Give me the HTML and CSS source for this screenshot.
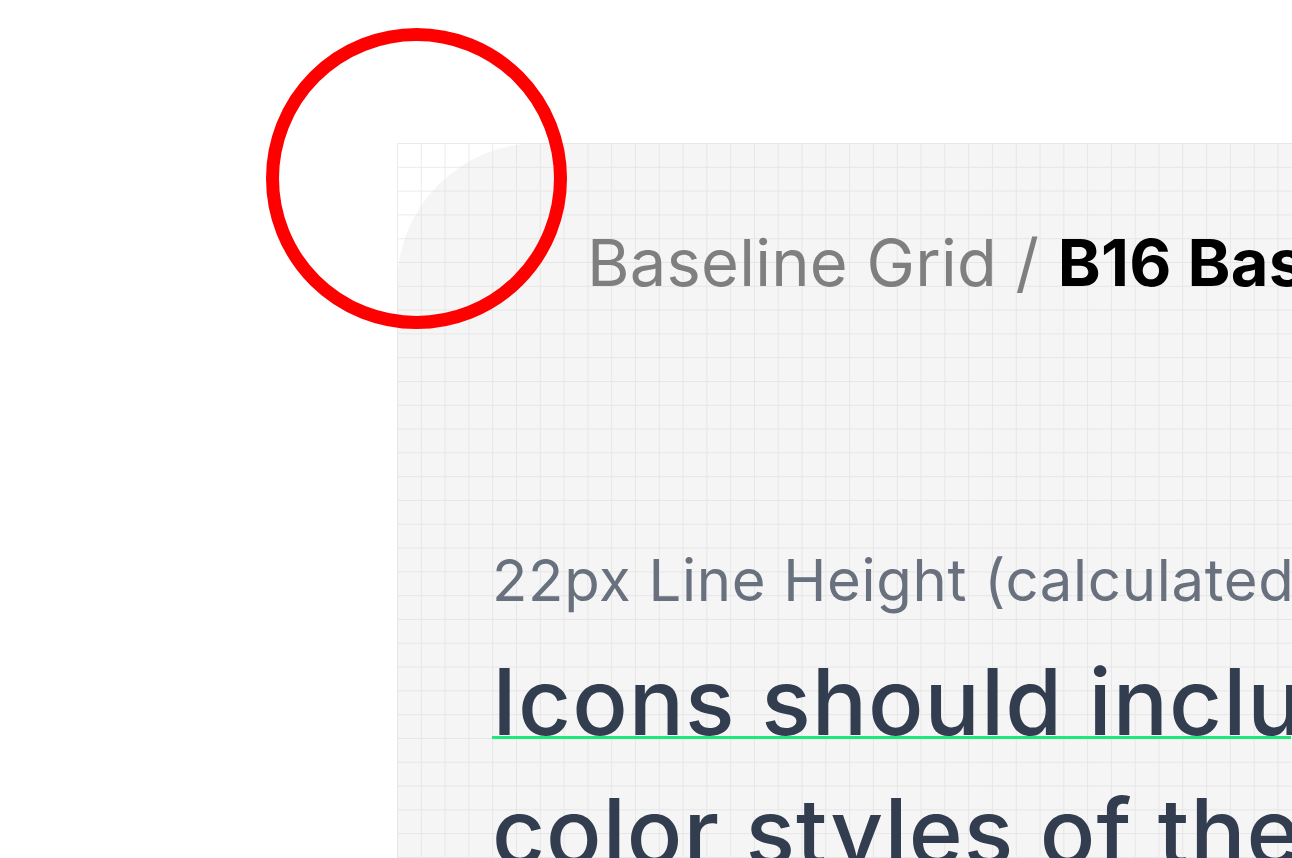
FILE: index.html
```html
<!DOCTYPE html>
<html lang="en">
<head>
<meta charset="utf-8">
<title>Baseline Grid / B16 Baseline</title>
<link rel="stylesheet" href="styles.css">
</head>
<body>
<div class="stage">
  <div class="card">
    <h1 class="title"><span class="crumb">Baseline Grid /</span> <span class="current">B16 Baseline</span></h1>
    <p class="caption">22px Line Height (calculated from 16px)</p>
    <p class="body">
      <span class="line first">Icons should include the</span>
      <span class="line">color styles of the theme.</span>
    </p>
  </div>
</div>
<div class="highlight" aria-hidden="true"></div>
</body>
</html>
```
FILE: styles.css
```css
html, body {
  margin: 0;
  padding: 0;
  width: 100%;
  height: 100%;
  overflow: hidden;
  background: #ffffff;
}

body {
  font-family: Inter, "Noto Sans", "Liberation Sans", sans-serif;
  position: relative;
}

.stage {
  margin: 143px 0 0 397px;
  height: 715px;
  overflow: hidden;
  background-color: #ffffff;
  background-image:
    linear-gradient(to right, #ebebeb 1px, transparent 1px),
    linear-gradient(to bottom, #ebebeb 1px, transparent 1px);
  background-size: 23.8px 23.8px;
}

.card {
  height: 100%;
  border-top-left-radius: 142px;
  background-color: #f5f5f5;
  background-image:
    linear-gradient(to right, #e6e6e6 1px, transparent 1px),
    linear-gradient(to bottom, #e6e6e6 1px, transparent 1px);
  background-size: 23.8px 23.8px;
  padding: 87px 0 0 95px;
  box-sizing: border-box;
}

.title {
  margin: 0 0 0 95px;
  font-size: 65px;
  line-height: 65px;
  font-weight: 400;
  white-space: nowrap;
  letter-spacing: 0.25px;
}

.crumb {
  color: #7f7f7f;
}

.current {
  color: #000000;
  font-weight: 700;
}

.caption {
  margin: 256px 0 0 0;
  font-size: 58px;
  line-height: 58px;
  color: #69717f;
  white-space: nowrap;
  letter-spacing: 0.7px;
}

.body {
  margin: 28px 0 0 0;
  font-size: 92px;
  line-height: 130px;
  font-weight: 500;
  color: #323d4f;
  white-space: nowrap;
  letter-spacing: 1px;
  background-image: linear-gradient(#1ee97a, #1ee97a);
  background-repeat: no-repeat;
  background-size: 100% 3px;
  background-position: -1px 99px;
}

.line {
  display: block;
}

.highlight {
  position: absolute;
  left: 266px;
  top: 28px;
  width: 301px;
  height: 301px;
  box-sizing: border-box;
  border: 13px solid #ff0000;
  border-radius: 50%;
}
```
